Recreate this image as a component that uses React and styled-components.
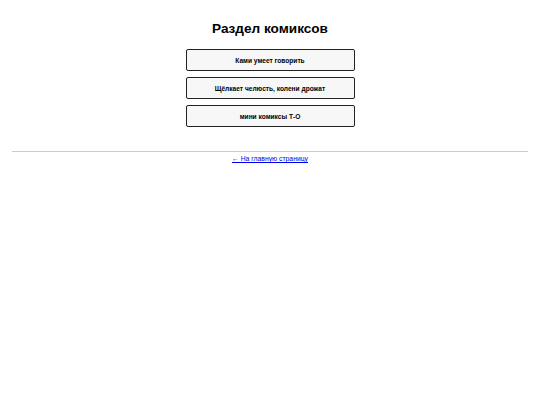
import React from 'react';
import styled, { createGlobalStyle } from 'styled-components';

const GlobalStyle = createGlobalStyle`
  body {
    margin: 0;
    background: #fff;
    font-family: 'Liberation Sans', Arial, sans-serif;
    color: #000;
  }
`;

const Page = styled.div`
  padding: 20px 12px 0;
`;

const Title = styled.h1`
  margin: 0 0 12px;
  font-size: 13.6px;
  line-height: 17px;
  font-weight: bold;
  text-align: center;
`;

const List = styled.div`
  display: flex;
  flex-direction: column;
  align-items: center;
  gap: 6px;
`;

const ComicButton = styled.button`
  width: 169px;
  height: 22px;
  padding: 0;
  border: 1px solid #222;
  border-radius: 2px;
  background: #f7f7f7;
  font-family: inherit;
  font-size: 6.6px;
  font-weight: bold;
  color: #000;
  cursor: pointer;
`;

const Divider = styled.hr`
  margin: 24px 0 0;
  border: 0;
  border-top: 1px solid #ccc;
`;

const Footer = styled.div`
  padding-top: 2px;
  text-align: center;
  font-size: 6.8px;
  line-height: 9px;

  a {
    color: #00e;
  }
`;

const comics = [
  'Ками умеет говорить',
  'Щёлкает челюсть, колени дрожат',
  'мини комиксы Т-О',
];

export default function App() {
  return (
    <>
      <GlobalStyle />
      <Page>
        <Title>Раздел комиксов</Title>
        <List>
          {comics.map((name) => (
            <ComicButton key={name}>{name}</ComicButton>
          ))}
        </List>
        <Divider />
        <Footer>
          <a href="#">← На главную страницу</a>
        </Footer>
      </Page>
    </>
  );
}
